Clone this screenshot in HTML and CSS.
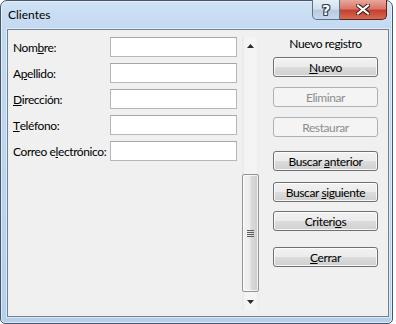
FILE: index.html
```html
<!DOCTYPE html>
<html lang="es">
<head>
    <meta charset="UTF-8">
    <meta name="viewport" content="width=device-width, initial-scale=1.0">
    <title>Clientes</title>
    <link rel="stylesheet" href="styles.css">
</head>
<body>
    <div class="window">
        <div class="titlebar">
            <span class="title">Clientes</span>
            <div class="caption-buttons">
                <div class="cap-btn help">?</div>
                <div class="cap-btn close">
                    <svg width="14" height="11" viewBox="0 0 14 11">
                        <path d="M2 1.5 L12 9.5 M12 1.5 L2 9.5" stroke="#3a1a14" stroke-width="4.2" stroke-linecap="square"/>
                        <path d="M2 1.5 L12 9.5 M12 1.5 L2 9.5" stroke="#fff" stroke-width="2.2" stroke-linecap="square"/>
                    </svg>
                </div>
            </div>
        </div>

        <div class="client">
            <div class="fields">
                <label>Nom<u>b</u>re:</label><input type="text">
                <label>A<u>p</u>ellido:</label><input type="text">
                <label><u>D</u>irección:</label><input type="text">
                <label><u>T</u>eléfono:</label><input type="text">
                <label>Correo e<u>l</u>ectrónico:</label><input type="text">
            </div>

            <div class="scrollbar">
                <div class="arrow">
                    <svg width="7" height="4" viewBox="0 0 7 4"><path d="M3.5 0 L7 4 L0 4 Z" fill="#2b2b2b"/></svg>
                </div>
                <div class="track">
                    <div class="thumb">
                        <svg width="7" height="7" viewBox="0 0 7 7">
                            <rect x="0" y="0" width="7" height="1" fill="#5c5c5c"/>
                            <rect x="0" y="2" width="7" height="1" fill="#5c5c5c"/>
                            <rect x="0" y="4" width="7" height="1" fill="#5c5c5c"/>
                            <rect x="0" y="6" width="7" height="1" fill="#5c5c5c"/>
                        </svg>
                    </div>
                </div>
                <div class="arrow">
                    <svg width="7" height="4" viewBox="0 0 7 4"><path d="M0 0 L7 0 L3.5 4 Z" fill="#2b2b2b"/></svg>
                </div>
            </div>

            <div class="actions">
                <div class="caption">Nuevo registro</div>
                <button class="btn"><u>N</u>uevo</button>
                <button class="btn" disabled>Eliminar</button>
                <button class="btn" disabled>Restaurar</button>
                <button class="btn gap-lg">Buscar <u>a</u>nterior</button>
                <button class="btn gap-md">Buscar <u>s</u>iguiente</button>
                <button class="btn gap-sm">Criteri<u>o</u>s</button>
                <button class="btn gap-xl"><u>C</u>errar</button>
            </div>
        </div>
    </div>
</body>
</html>
```

FILE: styles.css
```css
body {
    margin: 0;
    background-color: #ffffff;
    font-family: "Segoe UI", Lato, sans-serif;
    font-size: 12px;
    letter-spacing: -0.4px;
    color: #000;
}

.window {
    width: 393px;
    height: 324px;
    box-sizing: border-box;
    border: 1px solid #45566c;
    border-radius: 7px 7px 5px 5px;
    padding: 0 3px 6px 6px;
    display: flex;
    flex-direction: column;
    background: linear-gradient(to bottom, #cfe2f5 0px, #c3d9f0 28px, #b6cfea 100%);
    box-shadow: inset 0 0 0 1px rgba(255, 255, 255, 0.55);
}

.titlebar {
    height: 28px;
    display: flex;
    align-items: flex-start;
}

.title {
    margin: 6px 0 0 1px;
    line-height: 16px;
    letter-spacing: 0;
}

.caption-buttons {
    margin-left: auto;
    margin-right: 2px;
    display: flex;
    height: 20px;
    margin-top: -1px;
}

.cap-btn {
    height: 20px;
    box-sizing: border-box;
    display: flex;
    align-items: center;
    justify-content: center;
}

.help {
    width: 28px;
    border: 1px solid #5f7188;
    border-top: none;
    border-radius: 0 0 0 5px;
    background: linear-gradient(to bottom, #e6eef7 0%, #d3e0ee 45%, #b9cbe0 55%, #c8d8ea 100%);
    color: #fff;
    font-family: "DejaVu Sans", sans-serif;
    font-weight: bold;
    font-size: 14px;
    letter-spacing: 0;
    padding-top: 1px;
    text-shadow: 1px 0 0 #33445a, -1px 0 0 #33445a, 0 1px 0 #33445a, 0 -1px 0 #33445a,
                 1px 1px 0 #33445a, -1px -1px 0 #33445a, 1px -1px 0 #33445a, -1px 1px 0 #33445a;
}

.close {
    width: 47px;
    border: 1px solid #5a231b;
    border-top: none;
    border-left: none;
    border-radius: 0 0 5px 0;
    background: linear-gradient(to bottom, #e9a89b 0%, #d8776a 45%, #c6412f 55%, #d56a52 100%);
}

.client {
    flex: 1;
    display: flex;
    background-color: #f0f0f0;
    border: 1px solid #6f8196;
    box-shadow: 0 0 0 1px rgba(255, 255, 255, 0.5);
}

.fields {
    width: 234px;
    box-sizing: border-box;
    padding: 7px 0 0 5px;
    display: grid;
    grid-template-columns: 97px 127px;
    grid-auto-rows: 20px;
    row-gap: 6px;
    align-content: start;
}

.fields label {
    display: flex;
    align-items: center;
    white-space: nowrap;
}

.fields input {
    width: 127px;
    height: 20px;
    box-sizing: border-box;
    margin: 0;
    border: 1px solid #b4b7be;
    border-top-color: #a3a6ad;
    background-color: #fff;
}

.scrollbar {
    width: 17px;
    height: 273px;
    margin-top: 7px;
    display: flex;
    flex-direction: column;
    background: linear-gradient(to right, #e8e8e8, #f4f4f4 20%, #f4f4f4 80%, #ececec);
}

.arrow {
    height: 17px;
    display: flex;
    align-items: center;
    justify-content: center;
}

.track {
    flex: 1;
    display: flex;
    flex-direction: column;
    justify-content: flex-end;
    padding-bottom: 1px;
}

.thumb {
    height: 118px;
    box-sizing: border-box;
    border: 1px solid #959595;
    border-radius: 2px;
    background: linear-gradient(to right, #f3f3f3 0%, #ececec 45%, #dadada 55%, #cdcdcd 100%);
    box-shadow: inset 0 0 0 1px rgba(255, 255, 255, 0.7);
    display: flex;
    align-items: center;
    justify-content: center;
}

.actions {
    flex: 1;
    padding: 6px 0 0 14px;
    display: flex;
    flex-direction: column;
}

.caption {
    width: 105px;
    text-align: center;
    line-height: 16px;
    margin-bottom: 5px;
}

.btn {
    width: 105px;
    height: 20px;
    margin: 0 0 10px 0;
    padding: 0;
    font-family: inherit;
    font-size: 12px;
    letter-spacing: inherit;
    color: #000;
    border: 1px solid #707070;
    border-radius: 3px;
    background: linear-gradient(to bottom, #f2f2f2 0%, #ebebeb 50%, #dddddd 50%, #cfcfcf 100%);
    box-shadow: inset 0 0 0 1px rgba(255, 255, 255, 0.8);
}

.btn:disabled {
    color: #8d8d8d;
    border-color: #adb2b5;
    background: #f4f4f4;
    box-shadow: none;
}

.btn:nth-of-type(3) {
    margin-bottom: 14px;
}

.gap-lg {
    margin-bottom: 11px;
}

.gap-md {
    margin-bottom: 9px;
}

.gap-sm {
    margin-bottom: 16px;
}
```
